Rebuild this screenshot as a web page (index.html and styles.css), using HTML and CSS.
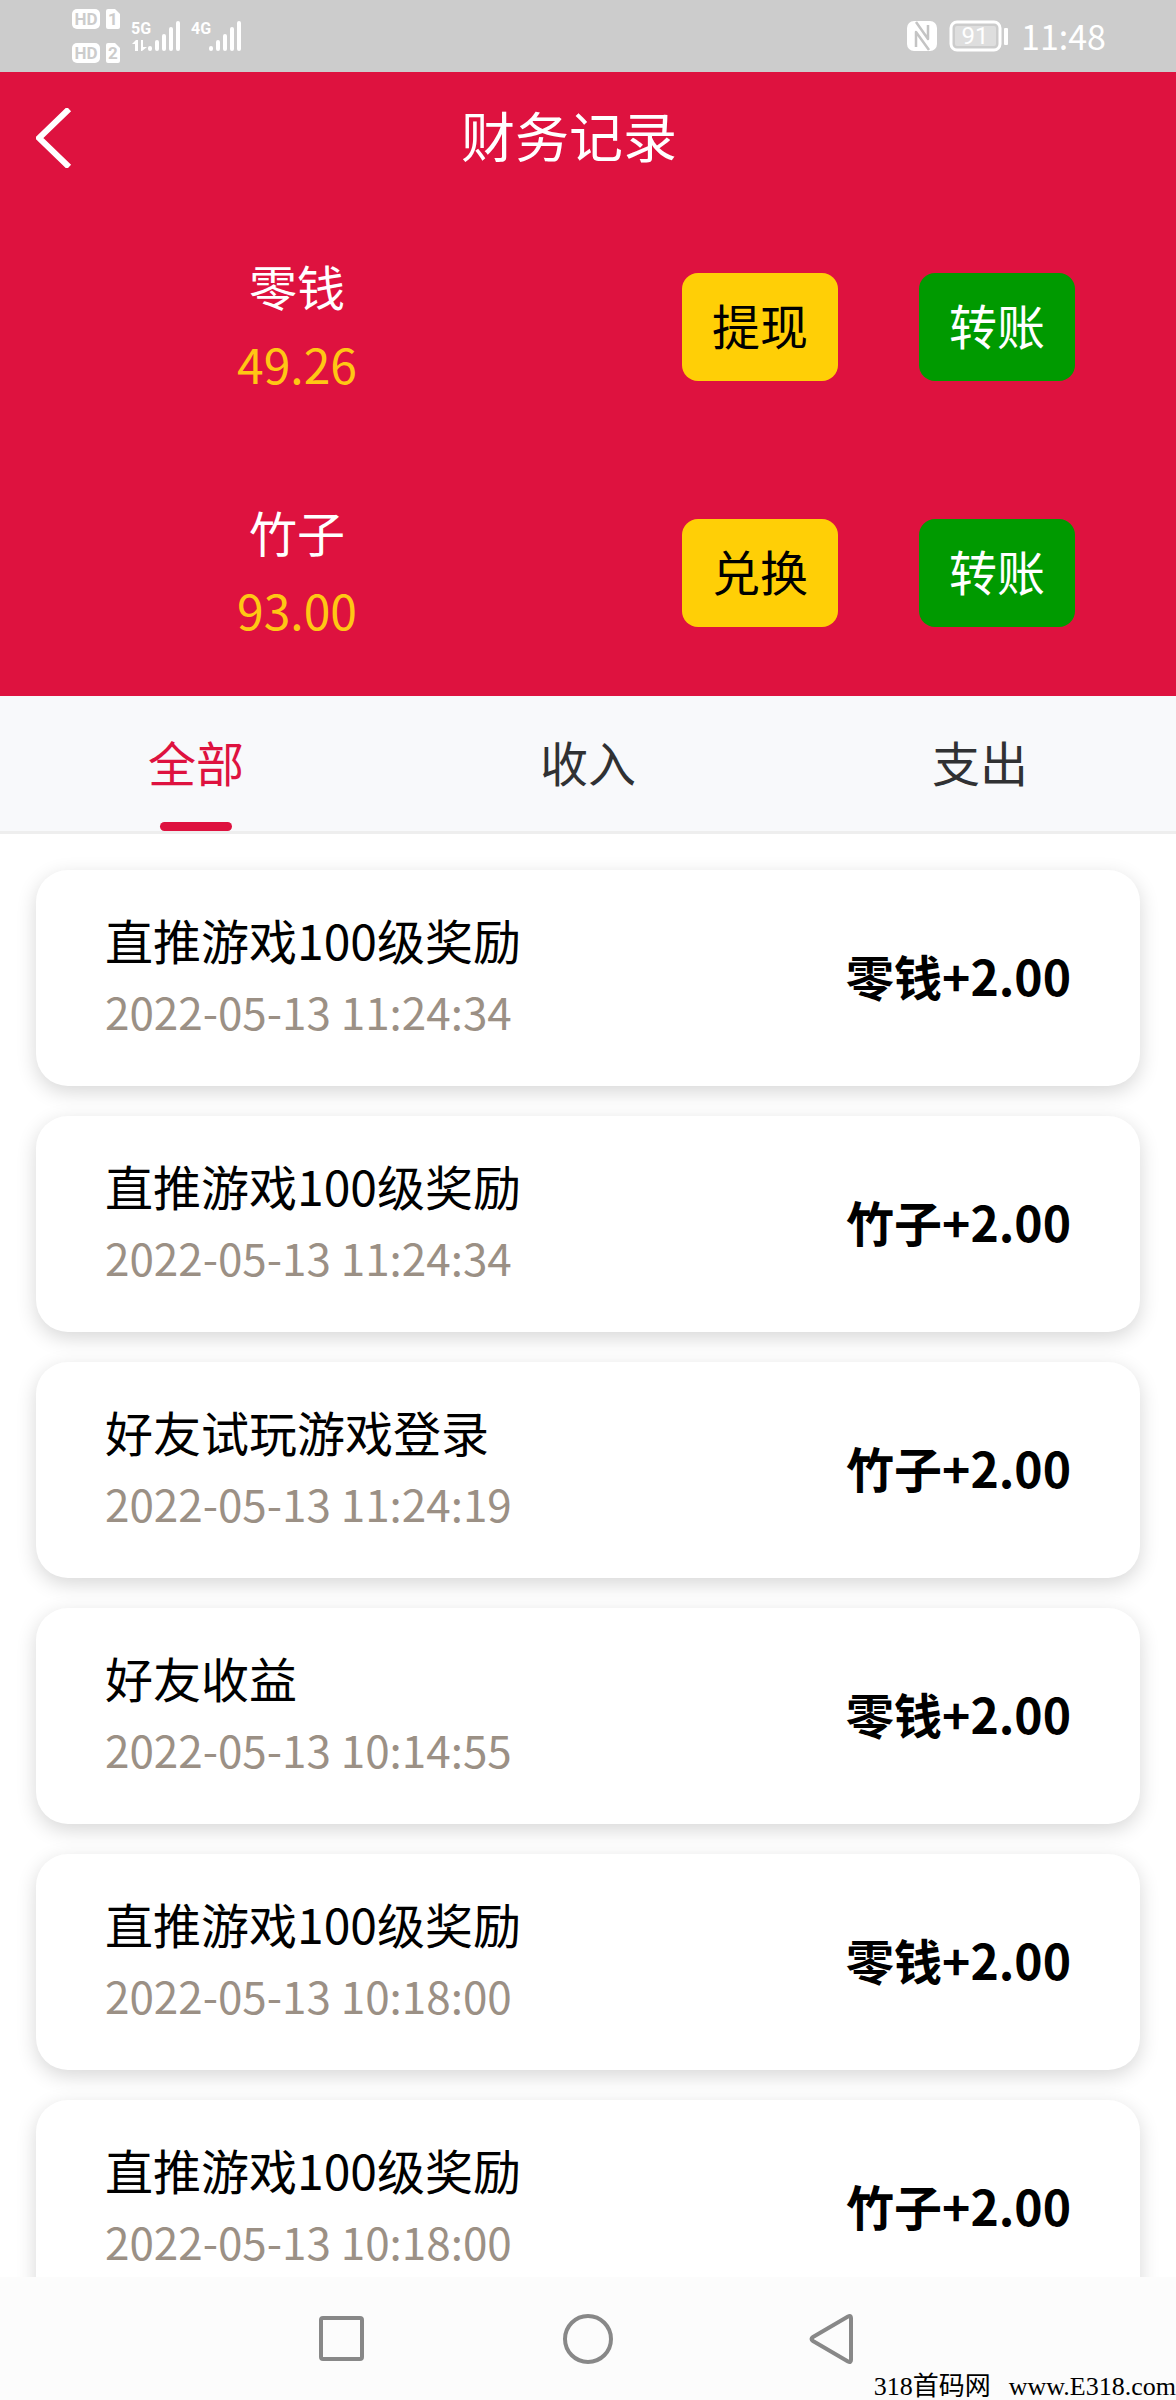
FILE: index.html
```html
<!DOCTYPE html>
<html lang="zh-CN">
<head>
<meta charset="utf-8">
<meta name="viewport" content="width=device-width, initial-scale=1">
<title>财务记录</title>
<link rel="stylesheet" href="styles.css">
</head>
<body>
<div class="screen">
  <div class="status">
    <svg class="status-signal" width="172" height="56" viewBox="0 0 172 56" fill="#fff" aria-label="信号">
      <rect x="0" y="1" width="28" height="20" rx="5"/>
      <rect x="0" y="35" width="28" height="20" rx="5"/>
      <path d="M34 3q0-2 2-2h7l5 5v13q0 2-2 2h-10q-2 0-2-2z"/>
      <path d="M34 37q0-2 2-2h7l5 5v13q0 2-2 2h-10q-2 0-2-2z"/>
      <g class="chip-text" text-anchor="middle">
        <text x="14" y="17">HD</text><text x="14" y="51">HD</text>
        <text x="41" y="17">1</text><text x="41" y="51">2</text>
      </g>
      <g class="net-text">
        <text x="59" y="26">5G</text><text x="119" y="26">4G</text>
      </g>
      <path d="M60 36l4-4h2v11h-3v-7zM69 32h2v7h4l-5 4h-1z"/>
      <g stroke="#fff" stroke-width="4" stroke-linecap="round">
        <path d="M78 40v1M85 34v7M92 28v13M99 21v20M106 15v26"/>
        <path d="M139 40v1M146 34v7M153 28v13M160 21v20M167 15v26"/>
      </g>
    </svg>
    <div class="status-right">
      <svg width="30" height="30" viewBox="0 0 30 30" aria-label="NFC">
        <rect width="30" height="30" rx="7" fill="#fff"/>
        <path d="M9 1L21 18V4M9 26V11l13 18" fill="none" stroke="#c4c4c4" stroke-width="2.500" stroke-linejoin="round"/>
      </svg>
      <svg width="60" height="32" viewBox="0 0 60 32" fill="#fff" aria-label="电量">
        <rect x="2" y="2" width="49" height="28" rx="6" fill="none" stroke="#fff" stroke-width="3"/>
        <rect x="6" y="6" width="41" height="20" rx="2" fill="#dedede"/>
        <rect x="55" y="8" width="4" height="17" rx="1"/>
        <text class="battery-text" x="26" y="24" text-anchor="middle">91</text>
      </svg>
      <span class="clock">11:48</span>
    </div>
  </div>

  <header class="header">
    <div class="titlebar">
      <button class="back" aria-label="返回">
        <svg width="36" height="60" viewBox="0 0 36 60" fill="none" stroke="#fff" stroke-width="6"><path d="M33 1L3 30l30 29"/></svg>
      </button>
      <h1 class="title">财务记录</h1>
    </div>
    <div class="balance">
      <div class="balance-info"><span>零钱</span><span class="balance-value">49.26</span></div>
      <div class="balance-actions">
        <button class="btn btn-yellow">提现</button>
        <button class="btn btn-green">转账</button>
      </div>
    </div>
    <div class="balance">
      <div class="balance-info"><span>竹子</span><span class="balance-value">93.00</span></div>
      <div class="balance-actions">
        <button class="btn btn-yellow">兑换</button>
        <button class="btn btn-green">转账</button>
      </div>
    </div>
  </header>

  <nav class="tabs">
    <button class="tab tab-active">全部</button>
    <button class="tab">收入</button>
    <button class="tab">支出</button>
  </nav>

  <ul class="records">
    <li class="record"><div><div class="record-name">直推游戏100级奖励</div><time class="record-time">2022-05-13 11:24:34</time></div><strong class="record-amount">零钱+2.00</strong></li>
    <li class="record"><div><div class="record-name">直推游戏100级奖励</div><time class="record-time">2022-05-13 11:24:34</time></div><strong class="record-amount">竹子+2.00</strong></li>
    <li class="record"><div><div class="record-name">好友试玩游戏登录</div><time class="record-time">2022-05-13 11:24:19</time></div><strong class="record-amount">竹子+2.00</strong></li>
    <li class="record"><div><div class="record-name">好友收益</div><time class="record-time">2022-05-13 10:14:55</time></div><strong class="record-amount">零钱+2.00</strong></li>
    <li class="record"><div><div class="record-name">直推游戏100级奖励</div><time class="record-time">2022-05-13 10:18:00</time></div><strong class="record-amount">零钱+2.00</strong></li>
    <li class="record"><div><div class="record-name">直推游戏100级奖励</div><time class="record-time">2022-05-13 10:18:00</time></div><strong class="record-amount">竹子+2.00</strong></li>
  </ul>

  <div class="sysnav">
    <button class="sysnav-key" aria-label="最近任务"><svg width="52" height="52" viewBox="0 0 52 52"><rect x="5" y="5" width="41" height="41" rx="2"/></svg></button>
    <button class="sysnav-key" aria-label="主屏幕"><svg width="52" height="52" viewBox="0 0 52 52"><circle cx="26" cy="26" r="23"/></svg></button>
    <button class="sysnav-key" aria-label="后退"><svg width="52" height="52" viewBox="0 0 52 52"><path d="M5 24L40 3.500Q43 2 43 5V47Q43 50 40 48.500L5 28Q2 26 5 24Z"/></svg></button>
    <div class="watermark"><span>318首码网</span><span>www.E318.com</span></div>
  </div>
</div>
</body>
</html>
```
FILE: styles.css
```css
* { box-sizing: border-box; }

body {
  margin: 0;
  background: #fff;
  color: #000;
  font-family: "Noto Sans CJK SC", "Noto Sans", sans-serif;
  font-size: 48px;
  line-height: 72px;
}

button {
  margin: 0;
  padding: 0;
  border: 0;
  background: none;
  color: inherit;
  font: inherit;
}

svg { display: block; }

.screen {
  display: flex;
  flex-direction: column;
  height: 100vh;
  overflow: hidden;
}

/* System status bar */
.status {
  flex: none;
  display: flex;
  justify-content: space-between;
  height: 72px;
  padding: 8px 70px 0 72px;
  background: #ccc;
  color: #fff;
}

.status-right {
  display: flex;
  align-items: center;
  gap: 12px;
  height: 56px;
}

.chip-text {
  fill: #ccc;
  font: bold 17px Roboto, sans-serif;
}

.net-text { font: bold 16px Roboto, sans-serif; }

.battery-text { font: 24px Roboto, sans-serif; }

.clock {
  font-size: 34px;
  line-height: 56px;
}

/* Header and balances */
.header {
  flex: none;
  background: #de123f;
  color: #fff;
}

.titlebar {
  display: flex;
  align-items: center;
  height: 132px;
  padding: 0 74px 0 36px;
}

.back { width: 36px; }

.title {
  flex: 1;
  margin: 0 36px 0 0;
  padding-bottom: 6px;
  font-size: 54px;
  font-weight: 400;
  text-align: center;
}

.balance {
  display: flex;
  align-items: center;
  height: 246px;
  padding-right: 101px;
}

.balance-info {
  flex: 1;
  display: flex;
  flex-direction: column;
  margin-right: 88px;
  padding-bottom: 6px;
  line-height: 78px;
  text-align: center;
}

.balance-value { color: #ffc714; }

.balance-actions {
  display: flex;
  gap: 81px;
}

.btn {
  width: 156px;
  height: 108px;
  padding-bottom: 6px;
  border-radius: 16px;
}

.btn-yellow { background: #ffcf06; color: #000; }

.btn-green { background: #009a00; }

/* Filter tabs */
.tabs {
  flex: none;
  display: flex;
  border-bottom: 3px solid #eee;
  background: #f8f9fb;
}

.tab {
  flex: 1;
  position: relative;
  height: 135px;
  padding-bottom: 6px;
  color: #303133;
}

.tab-active { color: #de123f; }

.tab-active::after {
  content: "";
  position: absolute;
  bottom: 0;
  left: calc(50% - 36px);
  width: 72px;
  height: 9px;
  border-radius: 5px;
  background: #de123f;
}

/* Record list */
.records {
  flex: 1;
  display: flex;
  flex-direction: column;
  gap: 30px;
  min-height: 0;
  margin: 0;
  padding: 36px;
  overflow: hidden;
  list-style: none;
}

.record {
  flex: none;
  display: flex;
  align-items: center;
  justify-content: space-between;
  padding: 33px 69px 39px;
  border-radius: 32px;
  background: #fff;
  box-shadow: 0 6px 20px rgba(0, 0, 0, 0.16);
}

.record-time {
  display: block;
  color: #9b9085;
  font-size: 44px;
}

/* System navigation */
.sysnav {
  flex: none;
  position: relative;
  display: flex;
  align-items: center;
  justify-content: center;
  gap: 194px;
  height: 123px;
  background: #fcfcfc;
}

.sysnav-key svg {
  fill: none;
  stroke: #888;
  stroke-width: 4;
}

.watermark {
  position: absolute;
  right: 0;
  bottom: 0;
  display: flex;
  gap: 18px;
  font: 26px/26px "Liberation Serif", "Noto Sans CJK SC", serif;
}
```
